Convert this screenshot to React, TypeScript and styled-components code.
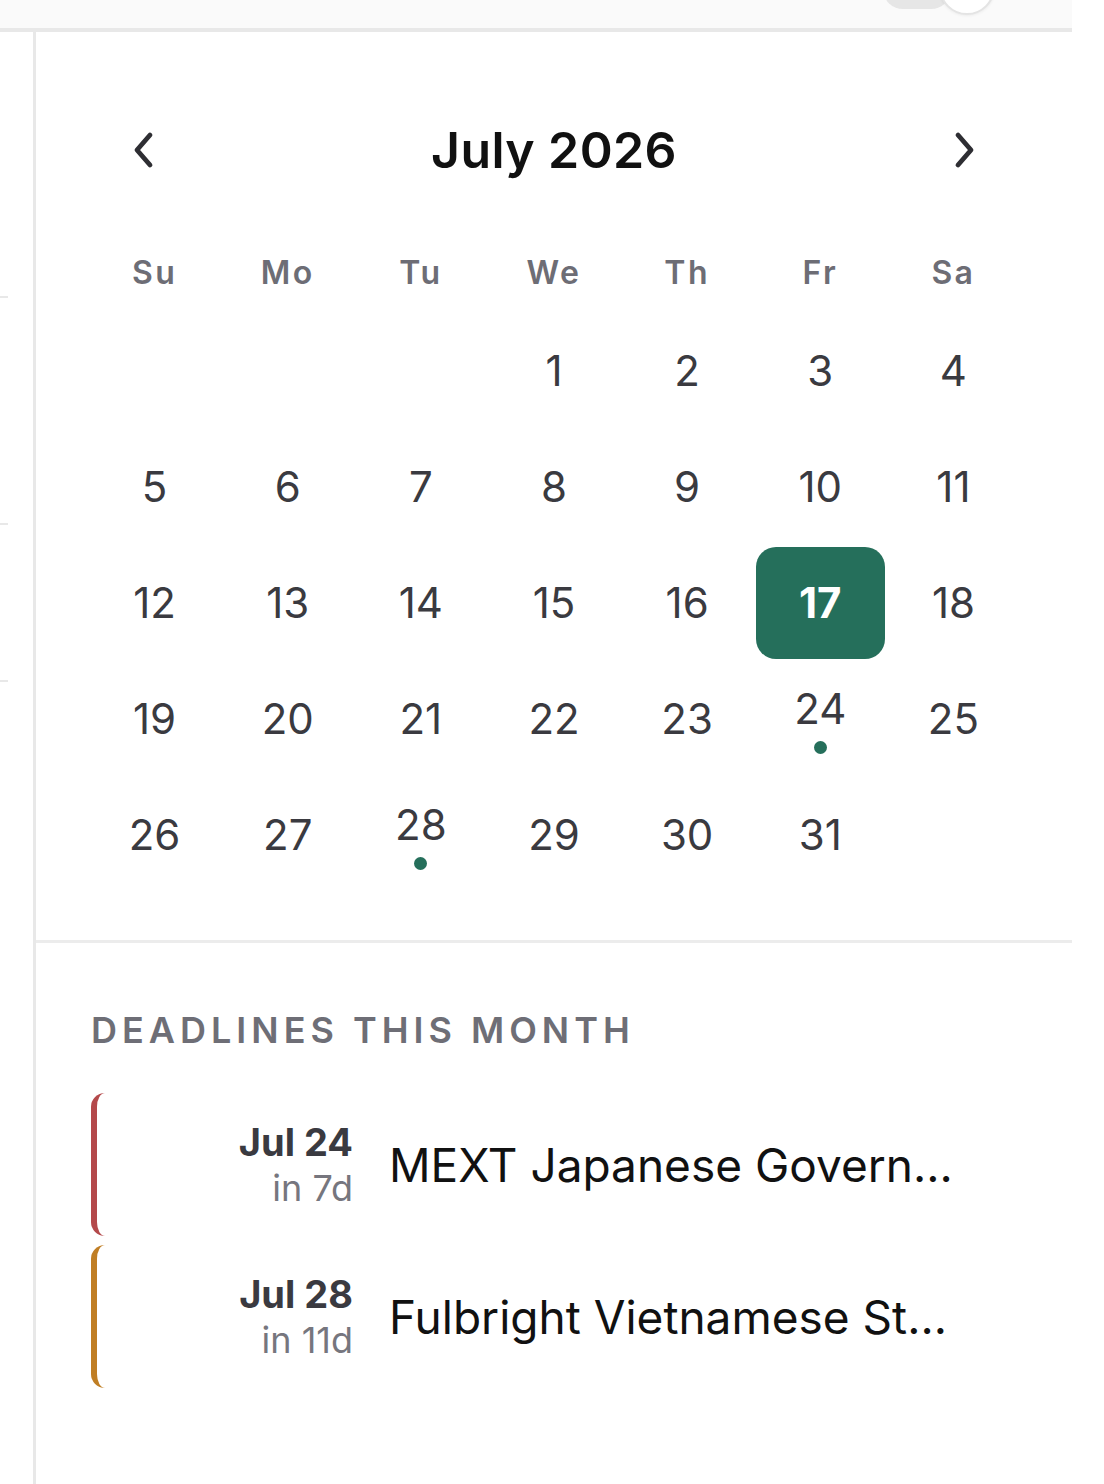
import styled, { createGlobalStyle } from "styled-components";

type Deadline = {
  date: string;
  left: string;
  title: string;
  color: string;
};

const WEEKDAYS = ["Su", "Mo", "Tu", "We", "Th", "Fr", "Sa"];
const FIRST_WEEKDAY = 3; // July 1 2026 is a Wednesday
const DAYS_IN_MONTH = 31;
const TODAY = 17;
const MARKED = [24, 28];

const deadlines: Deadline[] = [
  {
    date: "Jul 24",
    left: "in 7d",
    title: "MEXT Japanese Government Scholarship",
    color: "#b4494b",
  },
  {
    date: "Jul 28",
    left: "in 11d",
    title: "Fulbright Vietnamese Student Program",
    color: "#c07e24",
  },
];

const GlobalStyle = createGlobalStyle`
  * { box-sizing: border-box; }
  body {
    margin: 0;
    background: #ffffff;
    font-family: Inter, "Noto Sans", "Liberation Sans", sans-serif;
    -webkit-font-smoothing: antialiased;
  }
`;

const ChevronLeft = () => (
  <svg width="30" height="42" viewBox="0 0 30 42" fill="none">
    <path
      d="M21 6 L8 21 L21 36"
      stroke="#2e2e33"
      strokeWidth="4.8"
      strokeLinecap="round"
      strokeLinejoin="round"
    />
  </svg>
);

const ChevronRight = () => (
  <svg width="30" height="42" viewBox="0 0 30 42" fill="none">
    <path
      d="M9 6 L22 21 L9 36"
      stroke="#2e2e33"
      strokeWidth="4.8"
      strokeLinecap="round"
      strokeLinejoin="round"
    />
  </svg>
);

const App = () => {
  const cells: (number | null)[] = [];
  for (let i = 0; i < FIRST_WEEKDAY; i++) cells.push(null);
  for (let d = 1; d <= DAYS_IN_MONTH; d++) cells.push(d);

  return (
    <>
      <GlobalStyle />
      <Page>
        <TopBar>
          <Toggle>
            <ToggleTrack />
            <ToggleKnob />
          </Toggle>
        </TopBar>
        <Body>
          <Sidebar>
            <SideItem $height={266} />
            <SideItem $height={227} />
            <SideItem $height={157} />
          </Sidebar>
          <Panel>
            <CalendarSection>
              <MonthHeader>
                <NavButton aria-label="previous month">
                  <ChevronLeft />
                </NavButton>
                <MonthTitle>July 2026</MonthTitle>
                <NavButton aria-label="next month">
                  <ChevronRight />
                </NavButton>
              </MonthHeader>
              <WeekdayRow>
                {WEEKDAYS.map((w) => (
                  <Weekday key={w}>{w}</Weekday>
                ))}
              </WeekdayRow>
              <DayGrid>
                {cells.map((d, i) =>
                  d === null ? (
                    <DayCell key={`e${i}`} />
                  ) : (
                    <DayCell key={d} $selected={d === TODAY}>
                      <DayNumber $selected={d === TODAY}>{d}</DayNumber>
                      {MARKED.includes(d) && <Dot />}
                    </DayCell>
                  )
                )}
              </DayGrid>
            </CalendarSection>
            <DeadlineSection>
              <SectionTitle>Deadlines this month</SectionTitle>
              <DeadlineList>
                {deadlines.map((item) => (
                  <DeadlineItem key={item.date} $color={item.color}>
                    <DateBlock>
                      <DateText>{item.date}</DateText>
                      <LeftText>{item.left}</LeftText>
                    </DateBlock>
                    <DeadlineTitle>{item.title}</DeadlineTitle>
                  </DeadlineItem>
                ))}
              </DeadlineList>
            </DeadlineSection>
          </Panel>
        </Body>
      </Page>
    </>
  );
};

export default App;

const Page = styled.div`
  width: 1104px;
  min-height: 1484px;
  display: flex;
  flex-direction: column;
`;

const TopBar = styled.div`
  width: 1072px;
  height: 32px;
  background: #fafafa;
  border-bottom: 4px solid #e8e8e8;
  display: flex;
  justify-content: flex-end;
  align-items: flex-end;
  padding-right: 77px;
  overflow: hidden;
`;

const Toggle = styled.div`
  display: flex;
  align-items: flex-end;
  margin-bottom: 13px;
`;

const ToggleTrack = styled.div`
  width: 68px;
  height: 40px;
  margin-bottom: 6px;
  margin-right: -12px;
  border-radius: 20px;
  background: #e6e6e6;
`;

const ToggleKnob = styled.div`
  width: 56px;
  height: 56px;
  border-radius: 50%;
  background: #ffffff;
  border: 2px solid #e4e4e4;
  box-shadow: 0 1px 3px rgba(0, 0, 0, 0.06);
`;

const Body = styled.div`
  flex: 1;
  display: flex;
`;

const Sidebar = styled.div`
  width: 36px;
  border-right: 3px solid #e8e8e8;
  display: flex;
  flex-direction: column;
`;

const SideItem = styled.div<{ $height: number }>`
  width: 8px;
  height: ${(p) => p.$height}px;
  border-bottom: 2px solid #e8e8e8;
`;

const Panel = styled.div`
  width: 1036px;
  display: flex;
  flex-direction: column;
`;

const CalendarSection = styled.div`
  padding: 88px 54px 49px;
  border-bottom: 3px solid #ececec;
`;

const MonthHeader = styled.div`
  height: 60px;
  display: flex;
  align-items: center;
  justify-content: space-between;
  padding: 0 32px;
  margin-bottom: 70px;
`;

const NavButton = styled.button`
  width: 44px;
  height: 44px;
  border: none;
  background: transparent;
  padding: 0;
  display: flex;
  align-items: center;
  justify-content: center;
  cursor: pointer;
`;

const MonthTitle = styled.h2`
  margin: 0;
  font-size: 50px;
  font-weight: 600;
  color: #111111;
  letter-spacing: 0.4px;
`;

const WeekdayRow = styled.div`
  display: grid;
  grid-template-columns: repeat(7, 1fr);
  column-gap: 4px;
  height: 44px;
  margin-bottom: 21px;
`;

const Weekday = styled.div`
  display: flex;
  align-items: center;
  justify-content: center;
  font-size: 32px;
  font-weight: 600;
  letter-spacing: 2.4px;
  color: #6d6d75;
`;

const DayGrid = styled.div`
  display: grid;
  grid-template-columns: repeat(7, 1fr);
  grid-auto-rows: 112px;
  gap: 4px;
`;

const DayCell = styled.div<{ $selected?: boolean }>`
  display: flex;
  flex-direction: column;
  align-items: center;
  justify-content: center;
  border-radius: 20px;
  background: ${(p) => (p.$selected ? "#256f5b" : "transparent")};
`;

const DayNumber = styled.span<{ $selected?: boolean }>`
  font-size: 42px;
  line-height: 48px;
  font-weight: ${(p) => (p.$selected ? 700 : 400)};
  color: ${(p) => (p.$selected ? "#ffffff" : "#3a3a40")};
`;

const Dot = styled.span`
  width: 13px;
  height: 13px;
  margin-top: 8px;
  border-radius: 50%;
  background: #256f5b;
`;

const DeadlineSection = styled.div`
  padding: 67px 55px 0;
`;

const SectionTitle = styled.h3`
  margin: 0 0 43px;
  font-size: 36px;
  line-height: 40px;
  font-weight: 600;
  letter-spacing: 5px;
  text-transform: uppercase;
  color: #6e6e76;
`;

const DeadlineList = styled.div`
  display: flex;
  flex-direction: column;
  gap: 9px;
`;

const DeadlineItem = styled.div<{ $color: string }>`
  height: 143px;
  display: flex;
  align-items: center;
  gap: 36px;
  padding-left: 20px;
  border-left: 6px solid ${(p) => p.$color};
  border-radius: 14px;
`;

const DateBlock = styled.div`
  width: 236px;
  flex-shrink: 0;
  display: flex;
  flex-direction: column;
  align-items: flex-end;
`;

const DateText = styled.span`
  font-size: 38px;
  line-height: 46px;
  font-weight: 700;
  color: #3a3a40;
`;

const LeftText = styled.span`
  font-size: 36px;
  line-height: 46px;
  color: #76767e;
`;

const DeadlineTitle = styled.span`
  max-width: 574px;
  font-size: 46px;
  line-height: 56px;
  color: #111111;
  white-space: nowrap;
  overflow: hidden;
  text-overflow: ellipsis;
`;
